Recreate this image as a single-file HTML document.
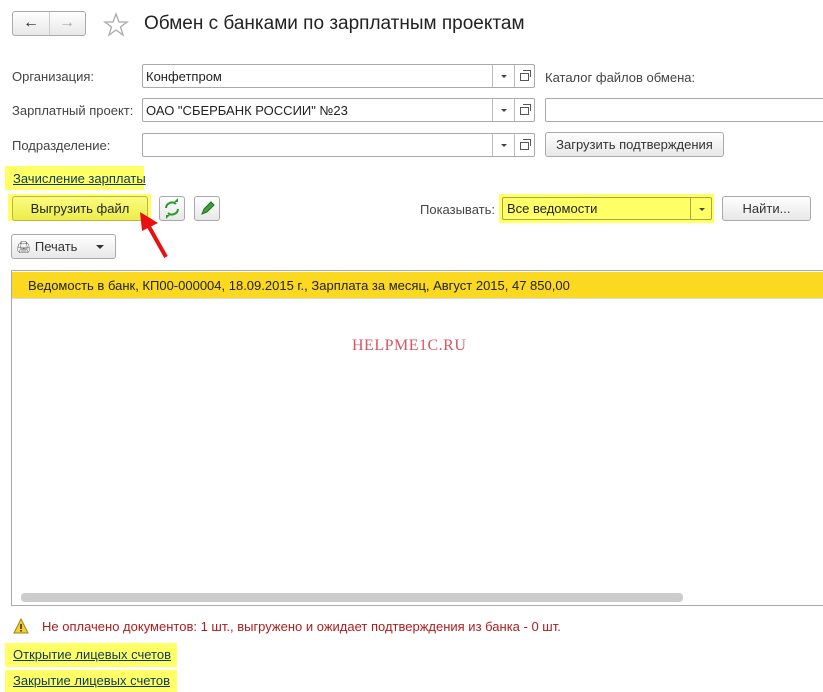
<!DOCTYPE html>
<html><head><meta charset="utf-8"><style>
*{box-sizing:border-box;margin:0;padding:0}
body{width:823px;height:692px;overflow:hidden;background:#fff;font-family:"Liberation Sans",Arial,sans-serif;font-size:13px;color:#333;position:relative}
.a{position:absolute}
.inp{position:absolute;border:1px solid #aaa;border-radius:2px;background:#fff;height:24px}
.btn{position:absolute;border:1px solid #a9a9a9;border-radius:3px;background:linear-gradient(#fff,#e8e8e8);height:25px;text-align:center;line-height:23px;color:#333}
.lbl{position:absolute;color:#444}
.hl{position:absolute;background:#ffff66}
.lnk{color:#0e3a5a;text-decoration:underline}
.dd{position:absolute;top:0;width:22px;height:22px;border-left:1px solid #bbb}
.dd:after{content:"";position:absolute;left:8px;top:10px;border:3px solid transparent;border-top:3px solid #444}
.op{position:absolute;top:0;width:21px;height:22px;border-left:1px solid #bbb}
.op:before{content:"";position:absolute;left:5px;top:8px;width:7px;height:6px;border:1px solid #555;background:#fff}
.op:after{content:"";position:absolute;left:8px;top:5px;width:7px;height:6px;border:1px solid #555;border-bottom:none;border-left:none}
</style></head><body>
<div class="btn" style="left:12px;top:11px;width:74px;height:25px"></div>
<div class="a" style="left:49px;top:12px;width:1px;height:23px;background:#ccc"></div>
<div class="a" style="left:23px;top:14px;font-size:16px;color:#222;font-weight:bold">&#8592;</div>
<div class="a" style="left:59px;top:14px;font-size:16px;color:#aaa;font-weight:bold">&#8594;</div>
<svg class="a" style="left:103px;top:12px" width="26" height="26" viewBox="0 0 26 26"><polygon points="13,2 16,10 24,10 17.5,15 20,23 13,18 6,23 8.5,15 2,10 10,10" fill="none" stroke="#aaa" stroke-width="1.3"/></svg>
<div class="a" style="left:144px;top:13px;font-size:19px;color:#222">Обмен с банками по зарплатным проектам</div>

<div class="lbl" style="left:12px;top:69px">Организация:</div>
<div class="lbl" style="left:12px;top:103px">Зарплатный проект:</div>
<div class="lbl" style="left:12px;top:138px">Подразделение:</div>
<div class="inp" style="left:142px;top:64px;width:393px"><span class="a" style="left:3px;top:4px;color:#222">Конфетпром</span><div class="dd" style="left:349px"></div><div class="op" style="left:371px"></div></div>
<div class="inp" style="left:142px;top:98px;width:393px"><span class="a" style="left:3px;top:4px;color:#222">ОАО "СБЕРБАНК РОССИИ" №23</span><div class="dd" style="left:349px"></div><div class="op" style="left:371px"></div></div>
<div class="inp" style="left:142px;top:133px;width:393px"><div class="dd" style="left:349px"></div><div class="op" style="left:371px"></div></div>
<div class="lbl" style="left:545px;top:70px">Каталог файлов обмена:</div>
<div class="inp" style="left:545px;top:98px;width:290px"></div>
<div class="btn" style="left:545px;top:132px;width:179px">Загрузить подтверждения</div>

<div class="hl" style="left:5px;top:166px;width:139px;height:24px"></div>
<div class="a lnk" style="left:13px;top:171px">Зачисление зарплаты</div>

<div class="hl" style="left:8px;top:194px;width:143px;height:27px"></div>
<div class="btn" style="left:12px;top:196px;width:136px;background:linear-gradient(#fbfb80,#eded4a);border-color:#b8b840;color:#222">Выгрузить файл</div>
<div class="btn" style="left:159px;top:196px;width:26px"><svg width="24" height="23" viewBox="0 0 24 23"><path d="M6 11a6 6 0 0 1 10-4M18 12a6 6 0 0 1-10 4" fill="none" stroke="#2a9a2a" stroke-width="2"/><path d="M14 5l4 0 0-4zM10 18l-4 0 0 4z" fill="#2a9a2a"/></svg></div>
<div class="btn" style="left:194px;top:196px;width:26px"><svg width="24" height="23" viewBox="0 0 24 23"><path d="M7 17l2-5 7-7 3 3-7 7z" fill="#3aa33a" stroke="#1d6d1d"/></svg></div>

<div class="lbl" style="left:420px;top:202px">Показывать:</div>
<div class="hl" style="left:499px;top:194px;width:215px;height:29px"></div>
<div class="inp" style="left:502px;top:197px;width:210px;height:23px;background:#ffff66;border-color:#a8a840"><span class="a" style="left:4px;top:3px;color:#222">Все ведомости</span><div class="dd" style="left:187px;border-color:#a8a840;height:21px"></div></div>
<div class="btn" style="left:722px;top:196px;width:89px">Найти...</div>

<div class="btn" style="left:11px;top:234px;width:105px;text-align:left;padding-left:4px"><span style="font-size:12px;color:#666">&#128424;</span> Печать <span style="position:absolute;left:84px;top:10px;border:4px solid transparent;border-top:4px solid #333"></span></div>

<div class="a" style="left:11px;top:270px;width:820px;height:336px;border:1px solid #a9a9a9"></div>
<div class="a" style="left:12px;top:272px;width:811px;height:26px;background:#fbd920"></div>
<div class="a" style="left:12px;top:298px;width:811px;height:1px;background:#ddd"></div>
<div class="a" style="left:28px;top:278px;color:#222">Ведомость в банк, КП00-000004, 18.09.2015 г., Зарплата за месяц, Август 2015, 47 850,00</div>
<div class="a" style="left:352px;top:337px;font-family:'Liberation Serif',serif;font-size:16px;color:#d9555f;letter-spacing:0.5px">HELPME1C.RU</div>
<div class="a" style="left:21px;top:593px;width:662px;height:9px;background:#ccc;border-radius:4px"></div>

<svg class="a" style="left:13px;top:618px" width="16" height="16" viewBox="0 0 16 16"><polygon points="8,1 15,15 1,15" fill="#f5d02a" stroke="#a08020"/><rect x="7.2" y="6" width="1.6" height="5" fill="#333"/><rect x="7.2" y="12" width="1.6" height="1.6" fill="#333"/></svg>
<div class="a" style="left:42px;top:619px;color:#b01c1c">Не оплачено документов: 1 шт., выгружено и ожидает подтверждения из банка - 0 шт.</div>

<div class="hl" style="left:5px;top:643px;width:172px;height:24px"></div>
<div class="a lnk" style="left:13px;top:647px">Открытие лицевых счетов</div>
<div class="hl" style="left:5px;top:670px;width:172px;height:22px"></div>
<div class="a lnk" style="left:13px;top:673px">Закрытие лицевых счетов</div>

<svg class="a" style="left:130px;top:205px" width="50" height="60" viewBox="0 0 50 60"><line x1="36" y1="52" x2="18" y2="20" stroke="#e81010" stroke-width="4"/><polygon points="10,7 28,18 12,26" fill="#e81010"/></svg>
</body></html>
